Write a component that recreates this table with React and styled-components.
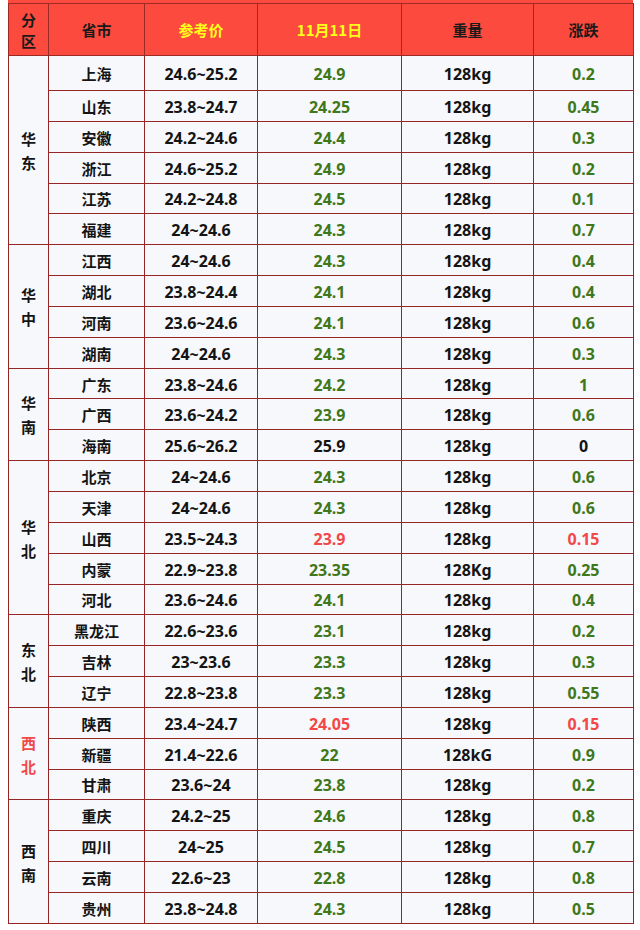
import React from "react";
import styled, { createGlobalStyle } from "styled-components";

const Global = createGlobalStyle`
  html, body { margin: 0; padding: 0; background: #ffffff; }
  body { font-family: "Noto Sans", "Noto Sans CJK SC", sans-serif; }
`;

const Page = styled.div`
  padding: 0 7px 0 8px;
  width: 625px;
`;

const TopStrip = styled.div`
  height: 3px;
  background: #fd4b3f;
`;

const Table = styled.table`
  border-collapse: collapse;
  table-layout: fixed;
  width: 625px;
  border: 1px solid #8e2323;
`;

const HeadCell = styled.th`
  background: #fd4a3e;
  border: 1px solid #9a2a24;
  height: 51px;
  padding: 0;
  font-family: "Noto Sans CJK SC", sans-serif;
  font-weight: 700;
  font-size: 15px;
  color: ${(p) => (p.$accent ? "#ffff1a" : "#1a1a1a")};
  text-align: center;
  vertical-align: middle;
`;

const Row = styled.tr`
  height: ${(p) => (p.$first ? "35px" : "30.85px")};
`;

const Cell = styled.td`
  background: #f6f8fc;
  border: 1px solid #962626;
  padding: 2px 0 0;
  text-align: center;
  vertical-align: middle;
  font-family: "Noto Sans", "Noto Sans CJK SC", sans-serif;
  font-weight: 700;
  font-size: 16px;
  line-height: 18px;
  color: ${(p) =>
    p.$tone === "green" ? "#3f771b" : p.$tone === "red" ? "#f24848" : "#141414"};
`;

const RegionCell = styled(Cell)`
  font-family: "Noto Sans CJK SC", sans-serif;
  font-size: 15px;
  line-height: 24px;
  color: ${(p) => (p.$red ? "#f24848" : "#141414")};
`;

const NameCell = styled(Cell)`
  font-family: "Noto Sans CJK SC", sans-serif;
  font-size: 15px;
  font-weight: 700;
`;

const Stack = styled.div`
  display: flex;
  flex-direction: column;
  align-items: center;
`;

const groups = [
  {
    name: "华东",
    rows: [
      ["上海", "24.6~25.2", "24.9", "128kg", "0.2"],
      ["山东", "23.8~24.7", "24.25", "128kg", "0.45"],
      ["安徽", "24.2~24.6", "24.4", "128kg", "0.3"],
      ["浙江", "24.6~25.2", "24.9", "128kg", "0.2"],
      ["江苏", "24.2~24.8", "24.5", "128kg", "0.1"],
      ["福建", "24~24.6", "24.3", "128kg", "0.7"],
    ],
  },
  {
    name: "华中",
    rows: [
      ["江西", "24~24.6", "24.3", "128kg", "0.4"],
      ["湖北", "23.8~24.4", "24.1", "128kg", "0.4"],
      ["河南", "23.6~24.6", "24.1", "128kg", "0.6"],
      ["湖南", "24~24.6", "24.3", "128kg", "0.3"],
    ],
  },
  {
    name: "华南",
    rows: [
      ["广东", "23.8~24.6", "24.2", "128kg", "1"],
      ["广西", "23.6~24.2", "23.9", "128kg", "0.6"],
      ["海南", "25.6~26.2", "25.9", "128kg", "0", "black"],
    ],
  },
  {
    name: "华北",
    rows: [
      ["北京", "24~24.6", "24.3", "128kg", "0.6"],
      ["天津", "24~24.6", "24.3", "128kg", "0.6"],
      ["山西", "23.5~24.3", "23.9", "128kg", "0.15", "red"],
      ["内蒙", "22.9~23.8", "23.35", "128Kg", "0.25"],
      ["河北", "23.6~24.6", "24.1", "128kg", "0.4"],
    ],
  },
  {
    name: "东北",
    rows: [
      ["黑龙江", "22.6~23.6", "23.1", "128kg", "0.2"],
      ["吉林", "23~23.6", "23.3", "128kg", "0.3"],
      ["辽宁", "22.8~23.8", "23.3", "128kg", "0.55"],
    ],
  },
  {
    name: "西北",
    red: true,
    rows: [
      ["陕西", "23.4~24.7", "24.05", "128kg", "0.15", "red"],
      ["新疆", "21.4~22.6", "22", "128kG", "0.9"],
      ["甘肃", "23.6~24", "23.8", "128kg", "0.2"],
    ],
  },
  {
    name: "西南",
    rows: [
      ["重庆", "24.2~25", "24.6", "128kg", "0.8"],
      ["四川", "24~25", "24.5", "128kg", "0.7"],
      ["云南", "22.6~23", "22.8", "128kg", "0.8"],
      ["贵州", "23.8~24.8", "24.3", "128kg", "0.5"],
    ],
  },
];

export default function App() {
  let first = true;
  return (
    <Page>
      <Global />
      <TopStrip />
      <Table>
        <colgroup>
          <col style={{ width: 40 }} />
          <col style={{ width: 96 }} />
          <col style={{ width: 113 }} />
          <col style={{ width: 144 }} />
          <col style={{ width: 132 }} />
          <col style={{ width: 100 }} />
        </colgroup>
        <thead>
          <tr>
            <HeadCell>
              <Stack>
                <span>分</span>
                <span>区</span>
              </Stack>
            </HeadCell>
            <HeadCell>省市</HeadCell>
            <HeadCell $accent>参考价</HeadCell>
            <HeadCell $accent>11月11日</HeadCell>
            <HeadCell>重量</HeadCell>
            <HeadCell>涨跌</HeadCell>
          </tr>
        </thead>
        <tbody>
          {groups.map((g) =>
            g.rows.map((r, i) => {
              const tone = r[5] || "green";
              const isFirst = first;
              first = false;
              return (
                <Row key={r[0]} $first={isFirst}>
                  {i === 0 && (
                    <RegionCell rowSpan={g.rows.length} $red={g.red}>
                      <Stack>
                        {g.name.split("").map((c) => (
                          <span key={c}>{c}</span>
                        ))}
                      </Stack>
                    </RegionCell>
                  )}
                  <NameCell>{r[0]}</NameCell>
                  <Cell>{r[1]}</Cell>
                  <Cell $tone={tone}>{r[2]}</Cell>
                  <Cell>{r[3]}</Cell>
                  <Cell $tone={tone}>{r[4]}</Cell>
                </Row>
              );
            })
          )}
        </tbody>
      </Table>
    </Page>
  );
}
